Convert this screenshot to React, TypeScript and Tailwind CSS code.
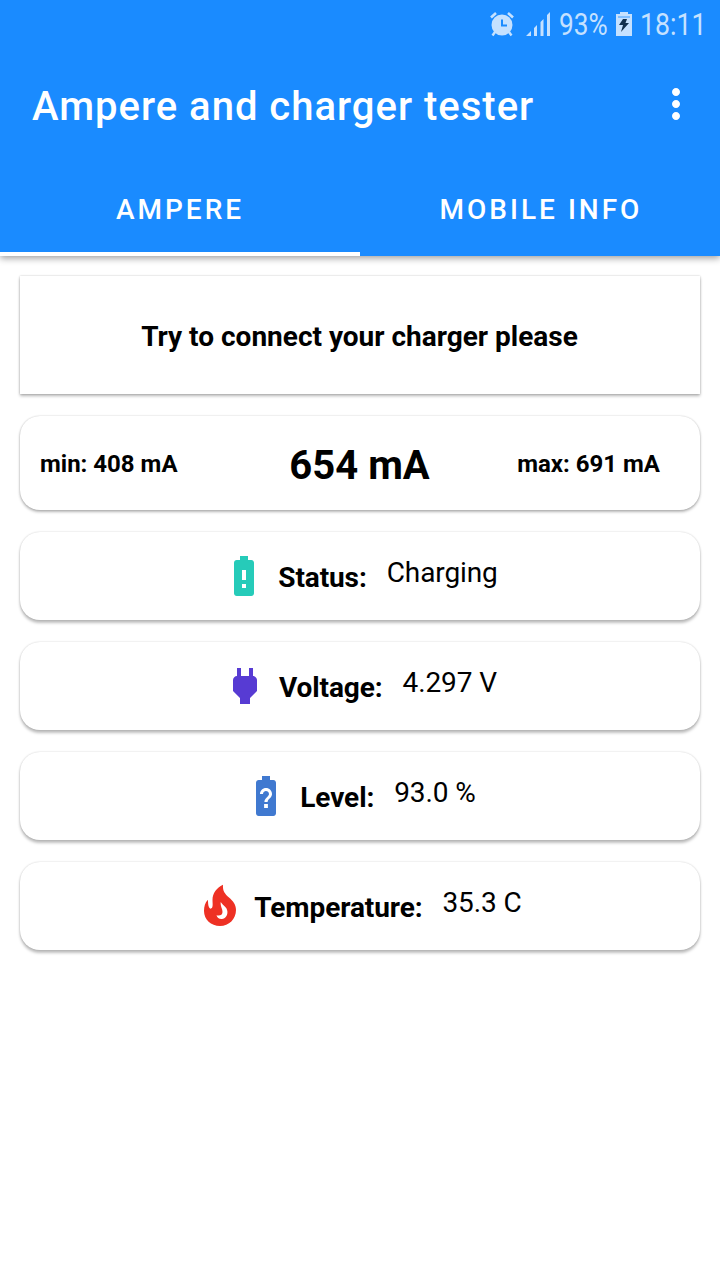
import type { ReactNode } from "react";
import { MdBatteryAlert, MdBatteryUnknown, MdMoreVert, MdPower } from "react-icons/md";

function StatusBar() {
  return (
    <div className="flex h-12 items-center justify-end pr-[14px] text-[31px] leading-none text-[#c5e1ff]">
      <svg width="24" height="25" viewBox="0 0 24 25" fill="none" className="mr-3">
        <circle cx="12" cy="13" r="10.5" fill="currentColor" />
        <path d="M1 5.5 6 1M23 5.5 18 1" stroke="currentColor" strokeWidth="2.6" />
        <path d="M5 20 2.5 23.5M19 20l2.5 3.5" stroke="currentColor" strokeWidth="2.4" />
        <path d="M12 7.5V13.5H17" stroke="#1a8bff" strokeWidth="2" />
      </svg>
      <svg width="25" height="24" viewBox="0 0 25 24" fill="currentColor" className="mr-2">
        <path d="M0 24 5 19V24ZM8 16 11 13V24H8ZM14.5 10 17.5 7V24H14.5ZM21 3 24 0V24H21Z" />
      </svg>
      <span className="w-[49px] origin-left scale-x-[0.845] whitespace-nowrap">93%</span>
      <svg width="16" height="24" viewBox="0 0 16 24" className="ml-2 mr-2">
        <path d="M4 0H12V2H16V24H0V2H4Z" fill="currentColor" />
        <path d="M2 5H14" stroke="#1a8bff" strokeWidth="0.8" />
        <path d="M7 7H11L9.5 11H13L5 20 7 13H3Z" fill="#12304f" />
      </svg>
      <span className="w-[66px] origin-left scale-x-[0.86] whitespace-nowrap">18:11</span>
    </div>
  );
}

function Flame() {
  return (
    <svg width="48" height="48" viewBox="0 0 48 48" fill="#ee3124">
      <path
        fillRule="evenodd"
        d="M27 2.7C26.5 9 29 12 33 15.5C37 19 40 22.5 40 28C40 37 33 44 24 44C15 44 8 37.5 8 29C8 24.5 9 20.5 12 17.7C12 22 12.3 25.5 14.5 26.8C17.5 26 16.5 22 16.5 18C16.5 11 20.5 6 27 2.7ZM24.7 20C24.3 25 26.5 26 26.5 30C26.5 33 24 34 20.5 33.3C21 36 23.5 37.3 26 37C29.5 36.5 31.7 33.5 31.4 29.5C31 24.8 27.2 24 24.7 20Z"
      />
    </svg>
  );
}

type ReadingProps = { icon: ReactNode; label: string; value: string };

function Reading({ icon, label, value }: ReadingProps) {
  return (
    <section className="flex h-[88px] items-center justify-center rounded-[20px] bg-white pr-[2px] text-[28px] leading-[33px] tracking-[-0.1px] text-black shadow-[0_3px_3px_rgba(0,0,0,0.25),0_0_2px_rgba(0,0,0,0.2)]">
      <span className="mr-[10px]">{icon}</span>
      <span className="mr-5 pt-[2px] font-bold">{label}</span>
      <span className="pb-2">{value}</span>
    </section>
  );
}

export default function App() {
  return (
    <div className="flex min-h-[1280px] w-full flex-col bg-white font-[Roboto,sans-serif]">
      <header className="flex h-64 flex-col bg-[#1a8bff] text-white shadow-[0_2px_7px_rgba(0,0,0,0.4)]">
        <StatusBar />
        <div className="flex h-[116px] items-center justify-between pl-8 pr-5">
          <h1 className="pt-[2px] text-[40px] font-medium leading-none tracking-[1px]">Ampere and charger tester</h1>
          <MdMoreVert size={48} className="mb-1" />
        </div>
        <nav className="grid flex-1 grid-cols-2 text-[28px] font-medium">
          <button className="border-b-4 border-white pt-1 tracking-[3px]">AMPERE</button>
          <button className="border-b-4 border-transparent pl-[2px] pt-1 tracking-[3px]">MOBILE INFO</button>
        </nav>
      </header>
      <main className="flex flex-col px-5 pt-5">
        <section className="flex h-[118px] items-center justify-center bg-white pr-px pt-1 text-[28px] font-bold text-black shadow-[0_2px_3px_rgba(0,0,0,0.28),0_0_2px_rgba(0,0,0,0.2)]">
          Try to connect your charger please
        </section>
        <section className="mt-[22px] grid h-[94px] grid-cols-[1fr_auto_1fr] items-center rounded-[20px] bg-white pl-5 pr-10 text-[24px] font-bold text-black shadow-[0_2px_3px_rgba(0,0,0,0.28),0_0_2px_rgba(0,0,0,0.2)]">
          <span className="pt-[2px]">min: 408 mA</span>
          <span className="pl-[19px] pt-[5px] text-[40px]">654 mA</span>
          <span className="pt-[2px] text-right">max: 691 mA</span>
        </section>
        <div className="mt-[22px] flex flex-col gap-[22px]">
          <Reading icon={<MdBatteryAlert size={48} color="#26cbb9" />} label="Status:" value="Charging" />
          <Reading icon={<MdPower size={48} color="#573bd3" />} label="Voltage:" value="4.297 V" />
          <Reading icon={<MdBatteryUnknown size={48} color="#4079d0" />} label="Level:" value="93.0 %" />
          <Reading icon={<Flame />} label="Temperature:" value="35.3 C" />
        </div>
      </main>
    </div>
  );
}
